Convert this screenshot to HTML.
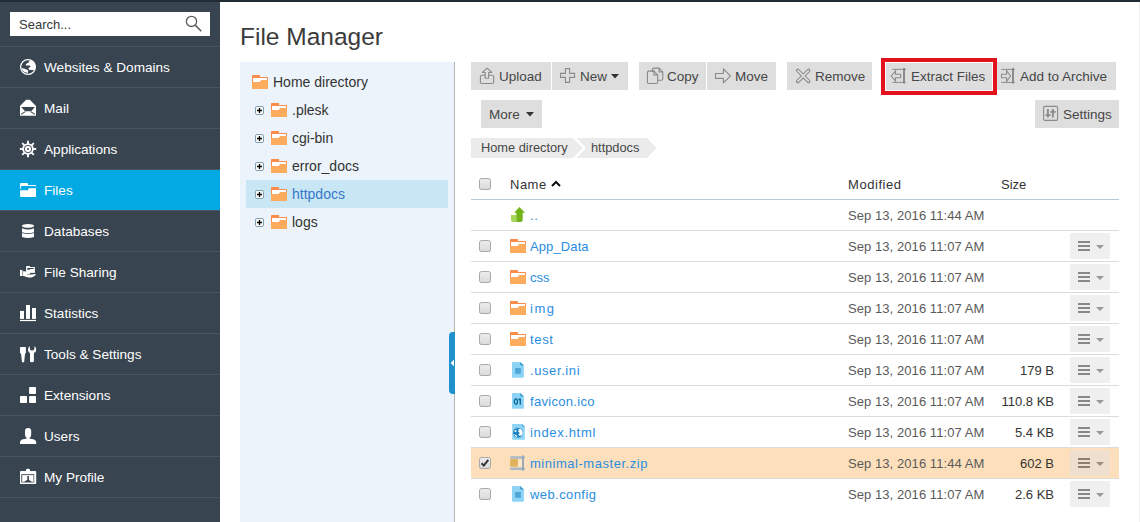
<!DOCTYPE html>
<html><head><meta charset="utf-8"><style>
*{margin:0;padding:0;box-sizing:border-box}
html,body{width:1140px;height:522px;overflow:hidden;background:#fff;font-family:"Liberation Sans",sans-serif}
body{position:relative}
.a{position:absolute;white-space:nowrap}
svg{position:absolute;overflow:visible}
</style></head><body>
<div class="a" style="left:0;top:0;width:1140px;height:2px;background:#222c35"></div>
<div class="a" style="left:0;top:2px;width:220px;height:520px;background:#38444f"></div>
<div class="a" style="left:10px;top:12px;width:200px;height:24px;background:#fff"></div>
<div class="a" style="left:19px;top:17px;font-size:13px;line-height:16px;color:#383838">Search...</div>
<svg style="left:185px;top:15px" width="18" height="18" viewBox="0 0 18 18"><circle cx="6.5" cy="6.4" r="5.1" fill="none" stroke="#5c5c5c" stroke-width="1.3"/><line x1="10.2" y1="10.1" x2="16.3" y2="16.2" stroke="#5c5c5c" stroke-width="1.5"/></svg>
<div class="a" style="left:0;top:46px;width:220px;height:1px;background:#4a5662"></div>
<svg style="left:20px;top:59px" width="16" height="16" viewBox="0 0 16 16"><circle cx="8" cy="8" r="7.4" fill="none" stroke="#fff" stroke-width="1.2"/><path d="M9.3 2 L11.2 1.1 Q14.5 2.5 15.3 6 L15.3 9.8 L13.9 11.2 L8.9 10.7 L8.4 9.3 L10.7 7.5 L9.8 6.6 L6.1 6.6 L5.6 5.7 L7 4.3 L8.4 3.8Z" fill="#fff"/><path d="M1.5 8.9 L4.7 9.8 L8 11.2 L8 13.9 L4.3 13 L1.8 10.7Z" fill="#fff"/></svg>
<div class="a" style="left:44px;top:60px;font-size:13.6px;line-height:16px;color:#fff">Websites &amp; Domains</div>
<div class="a" style="left:0;top:87px;width:220px;height:1px;background:#4a5662"></div>
<svg style="left:20px;top:100px" width="16" height="16" viewBox="0 0 16 16"><path d="M6.1 -0.3 L9.8 -0.3 L16 5.9 L16 15.3 Q16 15.8 15.5 15.8 L0.5 15.8 Q0 15.8 0 15.3 L0 5.9Z" fill="#fff"/><path d="M1.1 7 L14.9 7 L11.2 11.2 L5.2 11.2Z" fill="#38444f"/><path d="M1 14.4 L5.2 11.6 M14.9 14.4 L10.7 11.6" stroke="#38444f" stroke-width="1.1"/></svg>
<div class="a" style="left:44px;top:101px;font-size:13.6px;line-height:16px;color:#fff">Mail</div>
<div class="a" style="left:0;top:128px;width:220px;height:1px;background:#4a5662"></div>
<svg style="left:20px;top:141px" width="16" height="16" viewBox="0 0 16 16"><g stroke="#fff" stroke-width="1.9"><line x1="8" y1="-0.2" x2="8" y2="16.2"/><line x1="-0.2" y1="8" x2="16.2" y2="8"/><line x1="2.2" y1="2.2" x2="13.8" y2="13.8"/><line x1="13.8" y1="2.2" x2="2.2" y2="13.8"/></g><circle cx="8" cy="8" r="5.8" fill="#fff"/><circle cx="8" cy="8" r="3.7" fill="none" stroke="#38444f" stroke-width="0.9"/><circle cx="8" cy="8" r="1" fill="#38444f"/></svg>
<div class="a" style="left:44px;top:142px;font-size:13.6px;line-height:16px;color:#fff">Applications</div>
<div class="a" style="left:0;top:169px;width:220px;height:1px;background:#4a5662"></div>
<div class="a" style="left:0;top:170px;width:220px;height:40px;background:#03a9e2"></div>
<svg style="left:20px;top:182px" width="16" height="16" viewBox="0 0 16 16"><path d="M0.1 1.6 Q0.1 1 0.7 1 L7.7 1 L8.2 2.9 L15.4 2.9 Q16 2.9 16 3.5 L16 4.7 L15.1 4 L1.1 4 L1.1 6.8 L0.1 6.8Z" fill="#fff"/><path d="M0.1 8.2 L7.7 8.2 L8.9 6.3 L16 6.3 L16 14.3 Q16 14.9 15.4 14.9 L0.7 14.9 Q0.1 14.9 0.1 14.3Z" fill="#fff"/></svg>
<div class="a" style="left:44px;top:183px;font-size:13.6px;line-height:16px;color:#fff">Files</div>
<div class="a" style="left:0;top:210px;width:220px;height:1px;background:#4a5662"></div>
<svg style="left:20px;top:223px" width="16" height="16" viewBox="0 0 16 16"><ellipse cx="8" cy="2.9" rx="6" ry="1.9" fill="#fff"/><path d="M2 5.2 Q8 7.8 14 5.2 L14 9.3 Q8 11 2 9.3Z" fill="#fff"/><path d="M2 9.9 Q8 12.2 14 9.9 L14 14 Q8 15.8 2 14Z" fill="#fff"/></svg>
<div class="a" style="left:44px;top:224px;font-size:13.6px;line-height:16px;color:#fff">Databases</div>
<div class="a" style="left:0;top:251px;width:220px;height:1px;background:#4a5662"></div>
<svg style="left:20px;top:264px" width="16" height="16" viewBox="0 0 16 16"><path d="M6.1 2.6 Q6.1 2 6.7 2 L9.6 2 L10.3 2.9 L14.3 2.9 Q14.9 2.9 14.9 3.5 L14.9 8.9 L6.1 8.9Z" fill="#fff"/><path d="M7.3 4.1 L13.7 4.1 L13.7 4.9 L10.2 4.9 L9.6 5.7 L7.3 5.7Z" fill="#38444f"/><path d="M6.1 8.9 L14.9 8.9 L14.9 9.6 L6.1 9.6Z" fill="#38444f"/><path d="M0 5.9 L2.4 5.9 L2.6 7.2 L4 7.2 Q6 7.4 8 8.2 L9.8 8.6 Q10.6 9.3 9.8 10 L7 10 L7 10.6 L11.3 10.6 L16 10 Q15.6 11.8 12.6 13 Q10.3 13.9 7.6 13.2 L3.6 12 L0 12Z" fill="#fff"/><path d="M2.6 7.2 L2.6 11.6" stroke="#38444f" stroke-width="0.6"/></svg>
<div class="a" style="left:44px;top:265px;font-size:13.6px;line-height:16px;color:#fff">File Sharing</div>
<div class="a" style="left:0;top:292px;width:220px;height:1px;background:#4a5662"></div>
<svg style="left:20px;top:305px" width="16" height="16" viewBox="0 0 16 16"><rect x="0" y="14.9" width="16" height="1.2" fill="#fff"/><rect x="0" y="5.9" width="4" height="8" fill="#fff"/><rect x="6" y="0" width="4" height="13.9" fill="#fff"/><rect x="12" y="3" width="4" height="10.9" fill="#fff"/></svg>
<div class="a" style="left:44px;top:306px;font-size:13.6px;line-height:16px;color:#fff">Statistics</div>
<div class="a" style="left:0;top:333px;width:220px;height:1px;background:#4a5662"></div>
<svg style="left:20px;top:346px" width="16" height="16" viewBox="0 0 16 16"><path d="M0.8 1 L5.1 1 Q5.9 1 5.9 1.8 L5.9 6.7 Q5.9 7.5 5.1 7.5 L4.1 16.2 L2 16.2 L1 7.5 Q0 7.5 0 6.7 L0 1.8 Q0 1 0.8 1Z" fill="#fff"/><path d="M9.2 0.6 L9.8 0.6 L9.8 3 Q10.5 4.6 12.1 4.6 Q13.7 4.6 14.4 3 L14.4 0.6 L15 0.6 Q16.2 1.8 16.2 3.8 Q16.2 6.2 13.9 7 L13.9 15.3 Q13.9 16.2 12 16.2 Q10 16.2 10 15.3 L10 7 Q8 6.2 8 3.8 Q8 1.8 9.2 0.6Z" fill="#fff"/></svg>
<div class="a" style="left:44px;top:347px;font-size:13.6px;line-height:16px;color:#fff">Tools &amp; Settings</div>
<div class="a" style="left:0;top:374px;width:220px;height:1px;background:#4a5662"></div>
<svg style="left:20px;top:387px" width="16" height="16" viewBox="0 0 16 16"><rect x="9.1" y="0" width="6.9" height="7" rx="0.8" fill="#fff"/><rect x="0" y="8.9" width="7" height="7.1" rx="0.8" fill="#fff"/><rect x="9.1" y="8.9" width="6.9" height="7.1" rx="0.8" fill="#fff"/></svg>
<div class="a" style="left:44px;top:388px;font-size:13.6px;line-height:16px;color:#fff">Extensions</div>
<div class="a" style="left:0;top:415px;width:220px;height:1px;background:#4a5662"></div>
<svg style="left:20px;top:428px" width="16" height="16" viewBox="0 0 16 16"><path d="M5 3 Q5 0 8.1 0 Q11.2 0 11.2 3 L11.2 6.5 Q11.2 9.3 9.6 9.5 L9.6 11 L6.6 11 L6.6 9.5 Q5 9.3 5 6.5Z" fill="#fff"/><path d="M0 14.5 Q0 12 3 11.2 Q5.5 10.4 8.1 10.4 Q10.7 10.4 13.2 11.2 Q16.2 12 16.2 14.5 L16.2 16 L0 16Z" fill="#fff"/></svg>
<div class="a" style="left:44px;top:429px;font-size:13.6px;line-height:16px;color:#fff">Users</div>
<div class="a" style="left:0;top:456px;width:220px;height:1px;background:#4a5662"></div>
<svg style="left:20px;top:469px" width="16" height="16" viewBox="0 0 16 16"><path d="M1 2 L15.2 2 Q16.2 2 16.2 3 L16.2 14.1 Q16.2 15.1 15.2 15.1 L1 15.1 Q0 15.1 0 14.1 L0 3 Q0 2 1 2Z" fill="#fff"/><rect x="1.3" y="5.2" width="12.9" height="8.3" fill="#38444f"/><rect x="2.2" y="6.1" width="11.3" height="6.7" fill="#fff"/><path d="M5.9 3.1 L5.9 1 Q5.9 -0.3 8 -0.3 Q10 -0.3 10 1 L10 3.1Z" fill="#fff"/><path d="M7.3 7 L8.9 7 L8.9 10.7 L11.9 13 L4 13 L7.3 10.7Z" fill="#38444f"/></svg>
<div class="a" style="left:44px;top:470px;font-size:13.6px;line-height:16px;color:#fff">My Profile</div>
<div class="a" style="left:0;top:497px;width:220px;height:1px;background:#4a5662"></div>
<div class="a" style="left:240px;top:23px;font-size:24.5px;line-height:28px;color:#3b3b3b">File Manager</div>
<div class="a" style="left:240px;top:62px;width:214px;height:460px;background:#ecf3fa"></div>
<div class="a" style="left:454px;top:62px;width:1px;height:460px;background:#b4b4b4"></div>
<div class="a" style="left:246px;top:180px;width:202px;height:28px;background:#c9e6f5"></div>
<svg style="left:252px;top:75px" width="16" height="14" viewBox="0 0 16 14"><path d="M0 0.8 Q0 0 0.8 0 L7.9 0 L7.9 2 L15.2 2 Q16 2 16 2.8 L16 13.2 Q16 13.9 15.3 13.9 L0.7 13.9 Q0 13.9 0 13.2Z" fill="#f98b4b"/><path d="M1 2.9 L15 2.9 L15 5.2 L9 5.2 L8 7.3 L1 7.3Z" fill="#fff"/><path d="M0 7.15 L8.1 7.15 L9.3 5 L16 5 L16 13.2 Q16 13.9 15.3 13.9 L0.7 13.9 Q0 13.9 0 13.2Z" fill="#fdab5c"/></svg>
<div class="a" style="left:273px;top:74px;font-size:14px;line-height:16px;color:#333">Home directory</div>
<svg style="left:255px;top:106px" width="10" height="10" viewBox="0 0 10 10"><rect x="0.5" y="0.5" width="8" height="8" rx="1.3" fill="#f9f9f6" stroke="#7f9db3" stroke-width="1"/><path d="M2 4.5 L7 4.5 M4.5 2 L4.5 7" stroke="#000" stroke-width="1.3"/></svg>
<svg style="left:271px;top:103px" width="16" height="14" viewBox="0 0 16 14"><path d="M0 0.8 Q0 0 0.8 0 L7.9 0 L7.9 2 L15.2 2 Q16 2 16 2.8 L16 13.2 Q16 13.9 15.3 13.9 L0.7 13.9 Q0 13.9 0 13.2Z" fill="#f98b4b"/><path d="M1 2.9 L15 2.9 L15 5.2 L9 5.2 L8 7.3 L1 7.3Z" fill="#fff"/><path d="M0 7.15 L8.1 7.15 L9.3 5 L16 5 L16 13.2 Q16 13.9 15.3 13.9 L0.7 13.9 Q0 13.9 0 13.2Z" fill="#fdab5c"/></svg>
<div class="a" style="left:292px;top:102px;font-size:14px;line-height:16px;color:#333">.plesk</div>
<svg style="left:255px;top:134px" width="10" height="10" viewBox="0 0 10 10"><rect x="0.5" y="0.5" width="8" height="8" rx="1.3" fill="#f9f9f6" stroke="#7f9db3" stroke-width="1"/><path d="M2 4.5 L7 4.5 M4.5 2 L4.5 7" stroke="#000" stroke-width="1.3"/></svg>
<svg style="left:271px;top:131px" width="16" height="14" viewBox="0 0 16 14"><path d="M0 0.8 Q0 0 0.8 0 L7.9 0 L7.9 2 L15.2 2 Q16 2 16 2.8 L16 13.2 Q16 13.9 15.3 13.9 L0.7 13.9 Q0 13.9 0 13.2Z" fill="#f98b4b"/><path d="M1 2.9 L15 2.9 L15 5.2 L9 5.2 L8 7.3 L1 7.3Z" fill="#fff"/><path d="M0 7.15 L8.1 7.15 L9.3 5 L16 5 L16 13.2 Q16 13.9 15.3 13.9 L0.7 13.9 Q0 13.9 0 13.2Z" fill="#fdab5c"/></svg>
<div class="a" style="left:292px;top:130px;font-size:14px;line-height:16px;color:#333">cgi-bin</div>
<svg style="left:255px;top:162px" width="10" height="10" viewBox="0 0 10 10"><rect x="0.5" y="0.5" width="8" height="8" rx="1.3" fill="#f9f9f6" stroke="#7f9db3" stroke-width="1"/><path d="M2 4.5 L7 4.5 M4.5 2 L4.5 7" stroke="#000" stroke-width="1.3"/></svg>
<svg style="left:271px;top:159px" width="16" height="14" viewBox="0 0 16 14"><path d="M0 0.8 Q0 0 0.8 0 L7.9 0 L7.9 2 L15.2 2 Q16 2 16 2.8 L16 13.2 Q16 13.9 15.3 13.9 L0.7 13.9 Q0 13.9 0 13.2Z" fill="#f98b4b"/><path d="M1 2.9 L15 2.9 L15 5.2 L9 5.2 L8 7.3 L1 7.3Z" fill="#fff"/><path d="M0 7.15 L8.1 7.15 L9.3 5 L16 5 L16 13.2 Q16 13.9 15.3 13.9 L0.7 13.9 Q0 13.9 0 13.2Z" fill="#fdab5c"/></svg>
<div class="a" style="left:292px;top:158px;font-size:14px;line-height:16px;color:#333">error_docs</div>
<svg style="left:255px;top:190px" width="10" height="10" viewBox="0 0 10 10"><rect x="0.5" y="0.5" width="8" height="8" rx="1.3" fill="#f9f9f6" stroke="#7f9db3" stroke-width="1"/><path d="M2 4.5 L7 4.5 M4.5 2 L4.5 7" stroke="#000" stroke-width="1.3"/></svg>
<svg style="left:271px;top:187px" width="16" height="14" viewBox="0 0 16 14"><path d="M0 0.8 Q0 0 0.8 0 L7.9 0 L7.9 2 L15.2 2 Q16 2 16 2.8 L16 13.2 Q16 13.9 15.3 13.9 L0.7 13.9 Q0 13.9 0 13.2Z" fill="#f98b4b"/><path d="M1 2.9 L15 2.9 L15 5.2 L9 5.2 L8 7.3 L1 7.3Z" fill="#fff"/><path d="M0 7.15 L8.1 7.15 L9.3 5 L16 5 L16 13.2 Q16 13.9 15.3 13.9 L0.7 13.9 Q0 13.9 0 13.2Z" fill="#fdab5c"/></svg>
<div class="a" style="left:292px;top:186px;font-size:14px;line-height:16px;color:#3578c8">httpdocs</div>
<svg style="left:255px;top:218px" width="10" height="10" viewBox="0 0 10 10"><rect x="0.5" y="0.5" width="8" height="8" rx="1.3" fill="#f9f9f6" stroke="#7f9db3" stroke-width="1"/><path d="M2 4.5 L7 4.5 M4.5 2 L4.5 7" stroke="#000" stroke-width="1.3"/></svg>
<svg style="left:271px;top:215px" width="16" height="14" viewBox="0 0 16 14"><path d="M0 0.8 Q0 0 0.8 0 L7.9 0 L7.9 2 L15.2 2 Q16 2 16 2.8 L16 13.2 Q16 13.9 15.3 13.9 L0.7 13.9 Q0 13.9 0 13.2Z" fill="#f98b4b"/><path d="M1 2.9 L15 2.9 L15 5.2 L9 5.2 L8 7.3 L1 7.3Z" fill="#fff"/><path d="M0 7.15 L8.1 7.15 L9.3 5 L16 5 L16 13.2 Q16 13.9 15.3 13.9 L0.7 13.9 Q0 13.9 0 13.2Z" fill="#fdab5c"/></svg>
<div class="a" style="left:292px;top:214px;font-size:14px;line-height:16px;color:#333">logs</div>
<div class="a" style="left:471px;top:62px;width:80px;height:28px;background:#dedede"></div>
<svg style="left:471px;top:62px" width="80" height="28" viewBox="471 62 80 28"><path d="M485.2 75.3 L481.9 75.3 Q480.4 75.3 480.4 76.8 L480.4 82 Q480.4 83.5 481.9 83.5 L492.2 83.5 Q493.7 83.5 493.7 82 L493.7 76.8 Q493.7 75.3 492.2 75.3 L488.6 75.3" fill="none" stroke="#8a8a8a" stroke-width="1.1"/><path d="M485.2 78.3 L485.2 72.5 L482.4 72.5 L487 68.1 L491.9 72.5 L488.6 72.5 L488.6 78.3Z" fill="none" stroke="#8a8a8a" stroke-width="1.1" stroke-linejoin="round"/></svg>
<div class="a" style="left:499px;top:69px;font-size:13.5px;line-height:15px;color:#474747">Upload</div>
<div class="a" style="left:552px;top:62px;width:76px;height:28px;background:#dedede"></div>
<svg style="left:552px;top:62px" width="76" height="28" viewBox="552 62 76 28"><path d="M565.4 68.6 L569.6 68.6 L569.6 73.4 L574.6 73.4 L574.6 77.4 L569.6 77.4 L569.6 82.4 L565.4 82.4 L565.4 77.4 L560.6 77.4 L560.6 73.4 L565.4 73.4Z" fill="none" stroke="#8a8a8a" stroke-width="1.1"/></svg>
<div class="a" style="left:580px;top:69px;font-size:13.5px;line-height:15px;color:#474747">New</div>
<svg style="left:611px;top:74px" width="8" height="5" viewBox="0 0 8 5"><path d="M0 0 L8 0 L4 4.5Z" fill="#333"/></svg>
<div class="a" style="left:639px;top:62px;width:67px;height:28px;background:#dedede"></div>
<svg style="left:639px;top:62px" width="67" height="28" viewBox="639 62 67 28"><path d="M655 71.1 L652.4 71.1 L652.4 69.6 Q652.4 68.1 653.9 68.1 L659 68.1 L662.8 71.9 L662.8 78.8 Q662.8 80.3 661.3 80.3 L657.7 80.3" fill="none" stroke="#8a8a8a" stroke-width="1.1"/><path d="M659 68.1 L659 71.9 L662.8 71.9" fill="none" stroke="#8a8a8a" stroke-width="1.1"/><path d="M648.9 71.1 L653.9 71.1 L657.7 74.9 L657.7 82 Q657.7 83.5 656.2 83.5 L648.9 83.5 Q647.4 83.5 647.4 82 L647.4 72.6 Q647.4 71.1 648.9 71.1Z" fill="none" stroke="#8a8a8a" stroke-width="1.1"/><path d="M653.9 71.1 L653.9 74.9 L657.7 74.9" fill="none" stroke="#8a8a8a" stroke-width="1.1"/></svg>
<div class="a" style="left:667px;top:69px;font-size:13.5px;line-height:15px;color:#474747">Copy</div>
<div class="a" style="left:707px;top:62px;width:69px;height:28px;background:#dedede"></div>
<svg style="left:707px;top:62px" width="69" height="28" viewBox="707 62 69 28"><path d="M715.5 73.5 L723.4 73.5 L723.4 68.8 L730.4 75.8 L723.4 82.9 L723.4 78.4 L715.5 78.4Z" fill="none" stroke="#8a8a8a" stroke-width="1.1" stroke-linejoin="round"/></svg>
<div class="a" style="left:735px;top:69px;font-size:13.5px;line-height:15px;color:#474747">Move</div>
<div class="a" style="left:787px;top:62px;width:85px;height:28px;background:#dedede"></div>
<svg style="left:787px;top:62px" width="85" height="28" viewBox="787 62 85 28"><path d="M797.8 70.5 L808.6 81.3 M808.6 70.5 L797.8 81.3" stroke="#8a8a8a" stroke-width="3.8" stroke-linecap="round"/><path d="M797.9 70.6 L808.5 81.2 M808.5 70.6 L797.9 81.2" stroke="#dedede" stroke-width="1.7" stroke-linecap="round"/></svg>
<div class="a" style="left:815px;top:69px;font-size:13.5px;line-height:15px;color:#474747">Remove</div>
<div class="a" style="left:886px;top:62px;width:106px;height:28px;background:#dedede"></div>
<svg style="left:886px;top:62px" width="106" height="28" viewBox="886 62 106 28"><path d="M892.3 69.4 L905.9 69.4 M892.3 82.4 L905.9 82.4" stroke="#8a8a8a" stroke-width="1"/><path d="M904 68.1 L904 83.5" stroke="#8a8a8a" stroke-width="2"/><path d="M891.2 76 L895.5 70.9 L895.5 74.3 L900.6 74.3 L900.6 77.7 L895.5 77.7 L895.5 81 Z" fill="none" stroke="#8a8a8a" stroke-width="1.1"/></svg>
<div class="a" style="left:911px;top:69px;font-size:13.5px;line-height:15px;color:#474747">Extract Files</div>
<div class="a" style="left:997px;top:62px;width:119px;height:28px;background:#dedede"></div>
<svg style="left:997px;top:62px" width="119" height="28" viewBox="997 62 119 28"><path d="M1001.3 69.4 L1014.9 69.4 M1001.3 82.4 L1014.9 82.4" stroke="#8a8a8a" stroke-width="1"/><path d="M1013 68.1 L1013 83.5" stroke="#8a8a8a" stroke-width="2"/><path d="M1001.5 74.3 L1006.6 74.3 L1006.6 70.6 L1010.6 76 L1006.6 81.3 L1006.6 77.7 L1001.5 77.7Z" fill="none" stroke="#8a8a8a" stroke-width="1.1"/></svg>
<div class="a" style="left:1020px;top:69px;font-size:13.5px;line-height:15px;color:#474747">Add to Archive</div>
<div class="a" style="left:481px;top:100px;width:61px;height:28px;background:#dedede"></div>
<div class="a" style="left:489px;top:107px;font-size:13.5px;line-height:15px;color:#474747">More</div>
<svg style="left:526px;top:112px" width="8" height="5" viewBox="0 0 8 5"><path d="M0 0 L8 0 L4 4.5Z" fill="#333"/></svg>
<div class="a" style="left:1035px;top:100px;width:84px;height:28px;background:#dedede"></div>
<svg style="left:1035px;top:100px" width="84" height="28" viewBox="1035 100 84 28"><rect x="1043.6" y="106.4" width="14" height="14" rx="1.3" fill="none" stroke="#8a8a8a" stroke-width="1.1"/><path d="M1047.9 109.1 L1047.9 117.6 M1052.9 109.1 L1052.9 117.6 M1045.4 115.1 L1050.6 115.1 M1050.4 111.9 L1055.7 111.9" stroke="#8a8a8a" stroke-width="1.9"/></svg>
<div class="a" style="left:1063px;top:107px;font-size:13.5px;line-height:15px;color:#474747">Settings</div>
<div class="a" style="left:881px;top:58px;width:116px;height:37px;border:4px solid #e3131e"></div>
<div class="a" style="left:885px;top:62px;width:108px;height:29px;border:1px solid #fff"></div>
<svg style="left:471px;top:138px" width="200" height="20" viewBox="0 0 200 20"><path d="M0 0 L102 0 L111.7 10 L102 20 L0 20Z" fill="#ebebeb"/><path d="M105.5 0 L176 0 L185.5 10 L176 20 L105.5 20 L115.2 10Z" fill="#ebebeb"/></svg>
<div class="a" style="left:481px;top:140px;font-size:12.8px;line-height:15px;color:#474747">Home directory</div>
<div class="a" style="left:591px;top:140px;font-size:12.8px;line-height:15px;color:#474747">httpdocs</div>
<svg style="left:479px;top:178px" width="12" height="13" viewBox="0 0 12 13"><defs><linearGradient id="cbg" x1="0" y1="0" x2="0" y2="1"><stop offset="0" stop-color="#ededed"/><stop offset="1" stop-color="#dadada"/></linearGradient></defs><rect x="0.5" y="1" width="11" height="11" rx="2" fill="#cfcfcf"/><rect x="0.5" y="0.5" width="11" height="11" rx="2" fill="url(#cbg)" stroke="#a9a9a9"/></svg>
<div class="a" style="left:510px;top:177px;font-size:13px;line-height:15px;color:#333;letter-spacing:0.5px">Name</div>
<svg style="left:551px;top:180px" width="10" height="7" viewBox="0 0 10 7"><path d="M1 6 L5 2 L9 6" fill="none" stroke="#111" stroke-width="2"/></svg>
<div class="a" style="left:848px;top:177px;font-size:13px;line-height:15px;color:#333;letter-spacing:0.55px">Modified</div>
<div class="a" style="left:1001px;top:177px;font-size:13px;line-height:15px;color:#333">Size</div>
<div class="a" style="left:471px;top:199px;width:648px;height:1px;background:#b9c9d8"></div>
<div class="a" style="left:471px;top:230px;width:648px;height:1px;background:#dcdcdc"></div>
<svg style="left:510px;top:207px" width="16" height="16" viewBox="0 0 16 16"><path d="M1 8 L6.3 8 L6.3 15 L3 15 Q1 15 1 13Z" fill="#a6d75b"/><path d="M9.5 0.1 L15 5.7 L12.7 5.7 L12.7 13 Q12.7 15 10.7 15 L6.3 15 L6.3 5.7 L4 5.7Z" fill="#72b31a"/></svg>
<div class="a" style="left:530px;top:208px;font-size:13px;line-height:15px;color:#2a8de0;letter-spacing:0.7px">..</div>
<div class="a" style="left:848px;top:208px;font-size:13px;line-height:15px;color:#5a5a5a;letter-spacing:0.07px">Sep 13, 2016 11:44 AM</div>
<div class="a" style="left:471px;top:261px;width:648px;height:1px;background:#dcdcdc"></div>
<svg style="left:479px;top:240px" width="12" height="13" viewBox="0 0 12 13"><defs><linearGradient id="cbg" x1="0" y1="0" x2="0" y2="1"><stop offset="0" stop-color="#ededed"/><stop offset="1" stop-color="#dadada"/></linearGradient></defs><rect x="0.5" y="1" width="11" height="11" rx="2" fill="#cfcfcf"/><rect x="0.5" y="0.5" width="11" height="11" rx="2" fill="url(#cbg)" stroke="#a9a9a9"/></svg>
<svg style="left:510px;top:239px" width="16" height="14" viewBox="0 0 16 14"><path d="M0 0.8 Q0 0 0.8 0 L7.9 0 L7.9 2 L15.2 2 Q16 2 16 2.8 L16 13.2 Q16 13.9 15.3 13.9 L0.7 13.9 Q0 13.9 0 13.2Z" fill="#f98b4b"/><path d="M1 2.9 L15 2.9 L15 5.2 L9 5.2 L8 7.3 L1 7.3Z" fill="#fff"/><path d="M0 7.15 L8.1 7.15 L9.3 5 L16 5 L16 13.2 Q16 13.9 15.3 13.9 L0.7 13.9 Q0 13.9 0 13.2Z" fill="#fdab5c"/></svg>
<div class="a" style="left:530px;top:239px;font-size:13px;line-height:15px;color:#2a8de0;letter-spacing:0.11px">App_Data</div>
<div class="a" style="left:848px;top:239px;font-size:13px;line-height:15px;color:#5a5a5a;letter-spacing:0.07px">Sep 13, 2016 11:07 AM</div>
<div class="a" style="left:1070px;top:233px;width:40px;height:26px;background:#efefef"></div>
<svg style="left:1078px;top:241px" width="28" height="10" viewBox="0 0 28 10"><path d="M0 1 L12 1 M0 5 L12 5 M0 9 L12 9" stroke="#888" stroke-width="2"/><path d="M18 4 L26 4 L22 8Z" fill="#999"/></svg>
<div class="a" style="left:471px;top:292px;width:648px;height:1px;background:#dcdcdc"></div>
<svg style="left:479px;top:271px" width="12" height="13" viewBox="0 0 12 13"><defs><linearGradient id="cbg" x1="0" y1="0" x2="0" y2="1"><stop offset="0" stop-color="#ededed"/><stop offset="1" stop-color="#dadada"/></linearGradient></defs><rect x="0.5" y="1" width="11" height="11" rx="2" fill="#cfcfcf"/><rect x="0.5" y="0.5" width="11" height="11" rx="2" fill="url(#cbg)" stroke="#a9a9a9"/></svg>
<svg style="left:510px;top:270px" width="16" height="14" viewBox="0 0 16 14"><path d="M0 0.8 Q0 0 0.8 0 L7.9 0 L7.9 2 L15.2 2 Q16 2 16 2.8 L16 13.2 Q16 13.9 15.3 13.9 L0.7 13.9 Q0 13.9 0 13.2Z" fill="#f98b4b"/><path d="M1 2.9 L15 2.9 L15 5.2 L9 5.2 L8 7.3 L1 7.3Z" fill="#fff"/><path d="M0 7.15 L8.1 7.15 L9.3 5 L16 5 L16 13.2 Q16 13.9 15.3 13.9 L0.7 13.9 Q0 13.9 0 13.2Z" fill="#fdab5c"/></svg>
<div class="a" style="left:530px;top:270px;font-size:13px;line-height:15px;color:#2a8de0;letter-spacing:0px">css</div>
<div class="a" style="left:848px;top:270px;font-size:13px;line-height:15px;color:#5a5a5a;letter-spacing:0.07px">Sep 13, 2016 11:07 AM</div>
<div class="a" style="left:1070px;top:264px;width:40px;height:26px;background:#efefef"></div>
<svg style="left:1078px;top:272px" width="28" height="10" viewBox="0 0 28 10"><path d="M0 1 L12 1 M0 5 L12 5 M0 9 L12 9" stroke="#888" stroke-width="2"/><path d="M18 4 L26 4 L22 8Z" fill="#999"/></svg>
<div class="a" style="left:471px;top:323px;width:648px;height:1px;background:#dcdcdc"></div>
<svg style="left:479px;top:302px" width="12" height="13" viewBox="0 0 12 13"><defs><linearGradient id="cbg" x1="0" y1="0" x2="0" y2="1"><stop offset="0" stop-color="#ededed"/><stop offset="1" stop-color="#dadada"/></linearGradient></defs><rect x="0.5" y="1" width="11" height="11" rx="2" fill="#cfcfcf"/><rect x="0.5" y="0.5" width="11" height="11" rx="2" fill="url(#cbg)" stroke="#a9a9a9"/></svg>
<svg style="left:510px;top:301px" width="16" height="14" viewBox="0 0 16 14"><path d="M0 0.8 Q0 0 0.8 0 L7.9 0 L7.9 2 L15.2 2 Q16 2 16 2.8 L16 13.2 Q16 13.9 15.3 13.9 L0.7 13.9 Q0 13.9 0 13.2Z" fill="#f98b4b"/><path d="M1 2.9 L15 2.9 L15 5.2 L9 5.2 L8 7.3 L1 7.3Z" fill="#fff"/><path d="M0 7.15 L8.1 7.15 L9.3 5 L16 5 L16 13.2 Q16 13.9 15.3 13.9 L0.7 13.9 Q0 13.9 0 13.2Z" fill="#fdab5c"/></svg>
<div class="a" style="left:530px;top:301px;font-size:13px;line-height:15px;color:#2a8de0;letter-spacing:1.5px">img</div>
<div class="a" style="left:848px;top:301px;font-size:13px;line-height:15px;color:#5a5a5a;letter-spacing:0.07px">Sep 13, 2016 11:07 AM</div>
<div class="a" style="left:1070px;top:295px;width:40px;height:26px;background:#efefef"></div>
<svg style="left:1078px;top:303px" width="28" height="10" viewBox="0 0 28 10"><path d="M0 1 L12 1 M0 5 L12 5 M0 9 L12 9" stroke="#888" stroke-width="2"/><path d="M18 4 L26 4 L22 8Z" fill="#999"/></svg>
<div class="a" style="left:471px;top:354px;width:648px;height:1px;background:#dcdcdc"></div>
<svg style="left:479px;top:333px" width="12" height="13" viewBox="0 0 12 13"><defs><linearGradient id="cbg" x1="0" y1="0" x2="0" y2="1"><stop offset="0" stop-color="#ededed"/><stop offset="1" stop-color="#dadada"/></linearGradient></defs><rect x="0.5" y="1" width="11" height="11" rx="2" fill="#cfcfcf"/><rect x="0.5" y="0.5" width="11" height="11" rx="2" fill="url(#cbg)" stroke="#a9a9a9"/></svg>
<svg style="left:510px;top:332px" width="16" height="14" viewBox="0 0 16 14"><path d="M0 0.8 Q0 0 0.8 0 L7.9 0 L7.9 2 L15.2 2 Q16 2 16 2.8 L16 13.2 Q16 13.9 15.3 13.9 L0.7 13.9 Q0 13.9 0 13.2Z" fill="#f98b4b"/><path d="M1 2.9 L15 2.9 L15 5.2 L9 5.2 L8 7.3 L1 7.3Z" fill="#fff"/><path d="M0 7.15 L8.1 7.15 L9.3 5 L16 5 L16 13.2 Q16 13.9 15.3 13.9 L0.7 13.9 Q0 13.9 0 13.2Z" fill="#fdab5c"/></svg>
<div class="a" style="left:530px;top:332px;font-size:13px;line-height:15px;color:#2a8de0;letter-spacing:0.67px">test</div>
<div class="a" style="left:848px;top:332px;font-size:13px;line-height:15px;color:#5a5a5a;letter-spacing:0.07px">Sep 13, 2016 11:07 AM</div>
<div class="a" style="left:1070px;top:326px;width:40px;height:26px;background:#efefef"></div>
<svg style="left:1078px;top:334px" width="28" height="10" viewBox="0 0 28 10"><path d="M0 1 L12 1 M0 5 L12 5 M0 9 L12 9" stroke="#888" stroke-width="2"/><path d="M18 4 L26 4 L22 8Z" fill="#999"/></svg>
<div class="a" style="left:471px;top:385px;width:648px;height:1px;background:#dcdcdc"></div>
<svg style="left:479px;top:364px" width="12" height="13" viewBox="0 0 12 13"><defs><linearGradient id="cbg" x1="0" y1="0" x2="0" y2="1"><stop offset="0" stop-color="#ededed"/><stop offset="1" stop-color="#dadada"/></linearGradient></defs><rect x="0.5" y="1" width="11" height="11" rx="2" fill="#cfcfcf"/><rect x="0.5" y="0.5" width="11" height="11" rx="2" fill="url(#cbg)" stroke="#a9a9a9"/></svg>
<svg style="left:510px;top:362px" width="16" height="17" viewBox="0 0 16 17"><path d="M3 0 L10.2 0 L13.9 3.6 L13.9 14.7 Q13.9 15.7 12.9 15.7 L3 15.7 Q2 15.7 2 14.7 L2 1 Q2 0 3 0Z" fill="#8dd3f5"/><path d="M10.2 0 L13.9 3.6 L11.2 3.6 Q10.2 3.6 10.2 2.6Z" fill="#3a9ad0"/><rect x="5.1" y="6" width="5.8" height="5.8" fill="#4fa7d8"/></svg>
<div class="a" style="left:530px;top:363px;font-size:13px;line-height:15px;color:#2a8de0;letter-spacing:0.59px">.user.ini</div>
<div class="a" style="left:848px;top:363px;font-size:13px;line-height:15px;color:#5a5a5a;letter-spacing:0.07px">Sep 13, 2016 11:07 AM</div>
<div class="a" style="left:954px;width:100px;text-align:right;top:363px;font-size:13px;line-height:15px;color:#333">179 B</div>
<div class="a" style="left:1070px;top:357px;width:40px;height:26px;background:#efefef"></div>
<svg style="left:1078px;top:365px" width="28" height="10" viewBox="0 0 28 10"><path d="M0 1 L12 1 M0 5 L12 5 M0 9 L12 9" stroke="#888" stroke-width="2"/><path d="M18 4 L26 4 L22 8Z" fill="#999"/></svg>
<div class="a" style="left:471px;top:416px;width:648px;height:1px;background:#dcdcdc"></div>
<svg style="left:479px;top:395px" width="12" height="13" viewBox="0 0 12 13"><defs><linearGradient id="cbg" x1="0" y1="0" x2="0" y2="1"><stop offset="0" stop-color="#ededed"/><stop offset="1" stop-color="#dadada"/></linearGradient></defs><rect x="0.5" y="1" width="11" height="11" rx="2" fill="#cfcfcf"/><rect x="0.5" y="0.5" width="11" height="11" rx="2" fill="url(#cbg)" stroke="#a9a9a9"/></svg>
<svg style="left:510px;top:393px" width="16" height="17" viewBox="0 0 16 17"><path d="M3 0 L10.2 0 L13.9 3.6 L13.9 14.7 Q13.9 15.7 12.9 15.7 L3 15.7 Q2 15.7 2 14.7 L2 1 Q2 0 3 0Z" fill="#8dd3f5"/><path d="M10.2 0 L13.9 3.6 L11.2 3.6 Q10.2 3.6 10.2 2.6Z" fill="#3a9ad0"/><ellipse cx="5.9" cy="8.6" rx="1.55" ry="2.75" fill="none" stroke="#0b6a9e" stroke-width="1.3"/><path d="M10.3 5.4 L10.3 11.8 M8.6 7 L10.3 5.6" fill="none" stroke="#0b6a9e" stroke-width="1.4"/></svg>
<div class="a" style="left:530px;top:394px;font-size:13px;line-height:15px;color:#2a8de0;letter-spacing:0.3px">favicon.ico</div>
<div class="a" style="left:848px;top:394px;font-size:13px;line-height:15px;color:#5a5a5a;letter-spacing:0.07px">Sep 13, 2016 11:07 AM</div>
<div class="a" style="left:954px;width:100px;text-align:right;top:394px;font-size:13px;line-height:15px;color:#333">110.8 KB</div>
<div class="a" style="left:1070px;top:388px;width:40px;height:26px;background:#efefef"></div>
<svg style="left:1078px;top:396px" width="28" height="10" viewBox="0 0 28 10"><path d="M0 1 L12 1 M0 5 L12 5 M0 9 L12 9" stroke="#888" stroke-width="2"/><path d="M18 4 L26 4 L22 8Z" fill="#999"/></svg>
<div class="a" style="left:471px;top:447px;width:648px;height:1px;background:#dcdcdc"></div>
<svg style="left:479px;top:426px" width="12" height="13" viewBox="0 0 12 13"><defs><linearGradient id="cbg" x1="0" y1="0" x2="0" y2="1"><stop offset="0" stop-color="#ededed"/><stop offset="1" stop-color="#dadada"/></linearGradient></defs><rect x="0.5" y="1" width="11" height="11" rx="2" fill="#cfcfcf"/><rect x="0.5" y="0.5" width="11" height="11" rx="2" fill="url(#cbg)" stroke="#a9a9a9"/></svg>
<svg style="left:510px;top:424px" width="16" height="17" viewBox="0 0 16 17"><path d="M2.2 0 L12 0 L14.8 2.8 L14.8 15.7 L2.2 15.7Z" fill="#8dd3f5"/><path d="M12 0 L14.8 2.8 L12.8 2.8Z" fill="#3a9ad0"/><circle cx="8.1" cy="8.8" r="4.9" fill="#1b82bf"/><path d="M8.4 5.2 L10.2 4.4 Q12.9 6 12.9 9 L12 11.4 L9.4 11.8 L8.2 10.6 L9.6 9.6 L9.2 8.2 L8 7.8 L8.8 6.6Z" fill="#fff"/><path d="M4.3 6.9 L6.2 5.8 L6.7 7.2 L5 8.2Z M4.2 10.2 L6.2 10.9 L7.4 12.4 L6.6 13 L4.8 11.6Z" fill="#fff"/></svg>
<div class="a" style="left:530px;top:425px;font-size:13px;line-height:15px;color:#2a8de0;letter-spacing:0.67px">index.html</div>
<div class="a" style="left:848px;top:425px;font-size:13px;line-height:15px;color:#5a5a5a;letter-spacing:0.07px">Sep 13, 2016 11:07 AM</div>
<div class="a" style="left:954px;width:100px;text-align:right;top:425px;font-size:13px;line-height:15px;color:#333">5.4 KB</div>
<div class="a" style="left:1070px;top:419px;width:40px;height:26px;background:#efefef"></div>
<svg style="left:1078px;top:427px" width="28" height="10" viewBox="0 0 28 10"><path d="M0 1 L12 1 M0 5 L12 5 M0 9 L12 9" stroke="#888" stroke-width="2"/><path d="M18 4 L26 4 L22 8Z" fill="#999"/></svg>
<div class="a" style="left:471px;top:448px;width:648px;height:30px;background:#fde0bb"></div>
<div class="a" style="left:471px;top:478px;width:648px;height:1px;background:#dcdcdc"></div>
<svg style="left:479px;top:457px" width="12" height="13" viewBox="0 0 12 13"><defs><linearGradient id="cbg" x1="0" y1="0" x2="0" y2="1"><stop offset="0" stop-color="#ededed"/><stop offset="1" stop-color="#dadada"/></linearGradient></defs><rect x="0.5" y="1" width="11" height="11" rx="2" fill="#cfcfcf"/><rect x="0.5" y="0.5" width="11" height="11" rx="2" fill="url(#cbg)" stroke="#a9a9a9"/><path d="M2.6 6.3 L4.8 8.6 L9.3 2.9" fill="none" stroke="#333" stroke-width="2"/></svg>
<svg style="left:510px;top:455px" width="16" height="16" viewBox="0 0 16 16"><rect x="0.1" y="4.1" width="7.9" height="7.6" rx="1" fill="#e2b35e"/><rect x="8" y="4.1" width="5.5" height="7.6" fill="#fde6c6"/><rect x="0.1" y="1.2" width="14.8" height="2.6" rx="1" fill="#a9b8c4"/><rect x="0.1" y="12.5" width="14.8" height="2.4" rx="1" fill="#a9b8c4"/><rect x="12.1" y="0.2" width="1.8" height="15.8" rx="0.9" fill="#8fa6b8"/></svg>
<div class="a" style="left:530px;top:456px;font-size:13px;line-height:15px;color:#2a8de0;letter-spacing:0.53px">minimal-master.zip</div>
<div class="a" style="left:848px;top:456px;font-size:13px;line-height:15px;color:#5a5a5a;letter-spacing:0.07px">Sep 13, 2016 11:44 AM</div>
<div class="a" style="left:954px;width:100px;text-align:right;top:456px;font-size:13px;line-height:15px;color:#333">602 B</div>
<div class="a" style="left:1070px;top:450px;width:40px;height:26px;background:#efdfcf"></div>
<svg style="left:1078px;top:458px" width="28" height="10" viewBox="0 0 28 10"><path d="M0 1 L12 1 M0 5 L12 5 M0 9 L12 9" stroke="#8c7e70" stroke-width="2"/><path d="M18 4 L26 4 L22 8Z" fill="#9c8d7e"/></svg>
<svg style="left:479px;top:488px" width="12" height="13" viewBox="0 0 12 13"><defs><linearGradient id="cbg" x1="0" y1="0" x2="0" y2="1"><stop offset="0" stop-color="#ededed"/><stop offset="1" stop-color="#dadada"/></linearGradient></defs><rect x="0.5" y="1" width="11" height="11" rx="2" fill="#cfcfcf"/><rect x="0.5" y="0.5" width="11" height="11" rx="2" fill="url(#cbg)" stroke="#a9a9a9"/></svg>
<svg style="left:510px;top:486px" width="16" height="17" viewBox="0 0 16 17"><path d="M3 0 L10.2 0 L13.9 3.6 L13.9 14.7 Q13.9 15.7 12.9 15.7 L3 15.7 Q2 15.7 2 14.7 L2 1 Q2 0 3 0Z" fill="#8dd3f5"/><path d="M10.2 0 L13.9 3.6 L11.2 3.6 Q10.2 3.6 10.2 2.6Z" fill="#3a9ad0"/><rect x="5.1" y="6" width="5.8" height="5.8" fill="#4fa7d8"/></svg>
<div class="a" style="left:530px;top:487px;font-size:13px;line-height:15px;color:#2a8de0;letter-spacing:0.42px">web.config</div>
<div class="a" style="left:848px;top:487px;font-size:13px;line-height:15px;color:#5a5a5a;letter-spacing:0.07px">Sep 13, 2016 11:07 AM</div>
<div class="a" style="left:954px;width:100px;text-align:right;top:487px;font-size:13px;line-height:15px;color:#333">2.6 KB</div>
<div class="a" style="left:1070px;top:481px;width:40px;height:26px;background:#efefef"></div>
<svg style="left:1078px;top:489px" width="28" height="10" viewBox="0 0 28 10"><path d="M0 1 L12 1 M0 5 L12 5 M0 9 L12 9" stroke="#888" stroke-width="2"/><path d="M18 4 L26 4 L22 8Z" fill="#999"/></svg>
<svg style="left:449px;top:332px" width="6" height="62" viewBox="0 0 6 62"><path d="M6 0 L6 62 L4 62 Q0 62 0 58 L0 4 Q0 0 4 0Z" fill="#1e90cc"/><path d="M1.6 31 L5 27.4 L5 34.6Z" fill="#fff"/></svg>
<div class="a" style="left:1139px;top:2px;width:1px;height:520px;background:#efefef"></div>
</body></html>
